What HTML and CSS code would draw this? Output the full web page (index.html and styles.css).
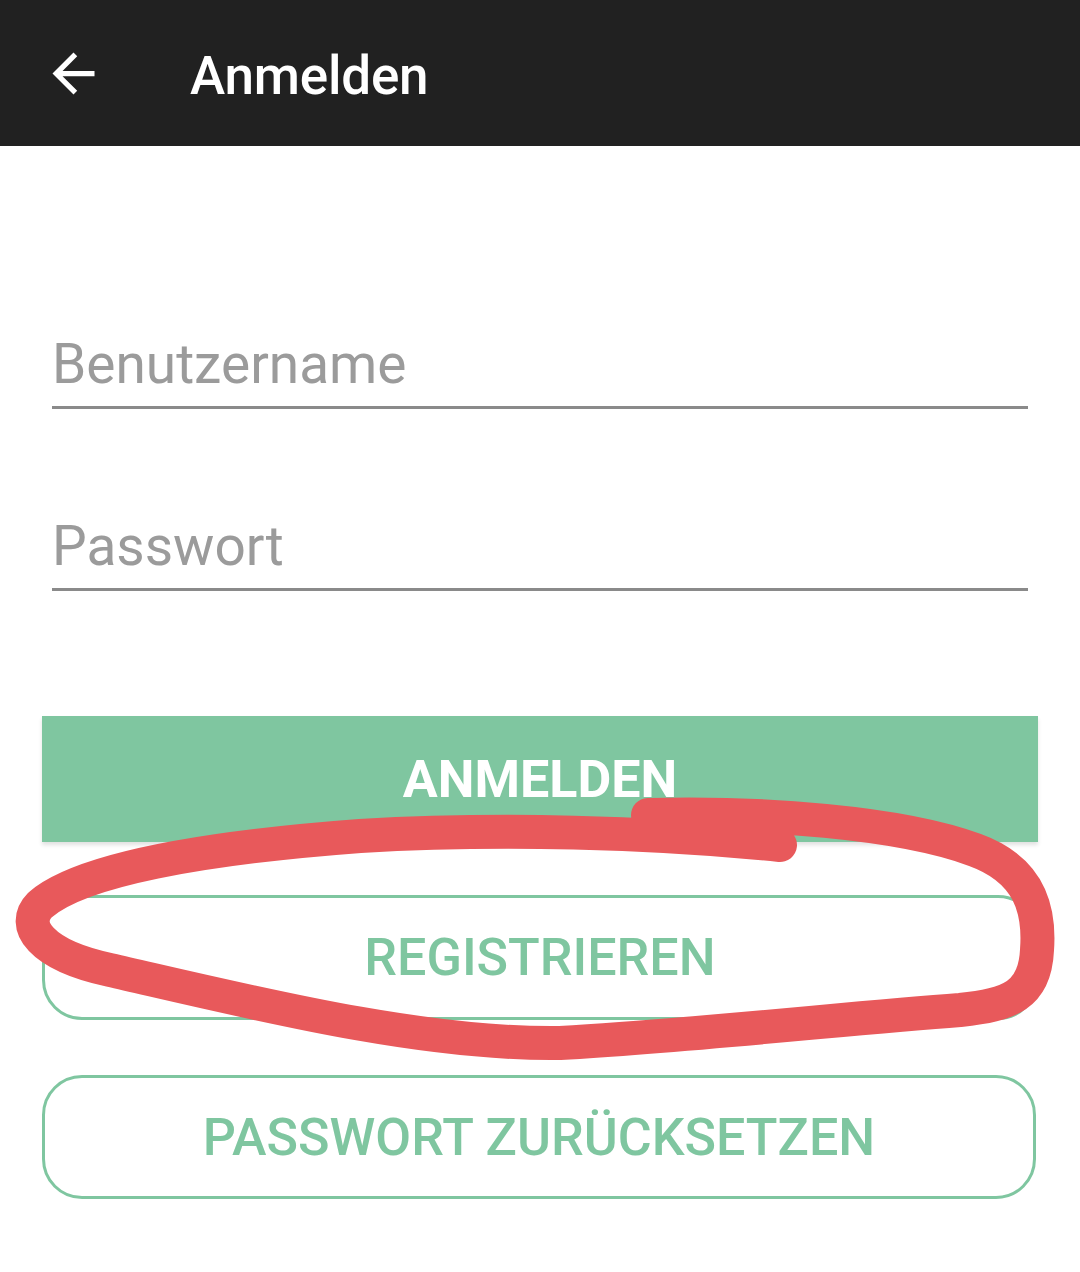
FILE: index.html
```html
<!DOCTYPE html>
<html lang="de">
<head>
<meta charset="utf-8">
<title>Anmelden</title>
<link rel="stylesheet" href="styles.css">
</head>
<body>
<div class="screen">
  <header class="appbar">
    <svg class="back" viewBox="0 0 24 24" width="63" height="63" aria-hidden="true">
      <path d="M20 11H7.83l5.59-5.59L12 4l-8 8 8 8 1.41-1.41L7.83 13H20v-2z" fill="#ffffff"/>
    </svg>
    <h1 class="title">Anmelden</h1>
  </header>
  <main class="content">
    <div class="fields">
      <div class="field">Benutzername</div>
      <div class="field field-second">Passwort</div>
    </div>
    <div class="buttons">
      <div class="btn btn-filled">ANMELDEN</div>
      <div class="btn btn-outline btn-register">REGISTRIEREN</div>
      <div class="btn btn-outline btn-reset">PASSWORT ZURÜCKSETZEN</div>
    </div>
  </main>
  <svg class="scribble" viewBox="0 0 1080 1272" width="1080" height="1272" aria-hidden="true">
    <path d="M648 815 C 760 812, 900 822, 975 850 C 1030 870, 1040 910, 1037 950 C 1035 995, 1010 1005, 960 1010 C 850 1018, 700 1035, 560 1043 C 420 1045, 250 1002, 110 970 C 40 955, 20 925, 40 905 C 80 870, 200 848, 360 836 C 500 828, 650 832, 780 845" fill="none" stroke="#e8595b" stroke-width="34" stroke-linecap="round" stroke-linejoin="round"/>
  </svg>
</div>
</body>
</html>
```

FILE: styles.css
```css
html, body {
  margin: 0;
  padding: 0;
  background: #ffffff;
}

body {
  font-family: Roboto, "Noto Sans", "Liberation Sans", sans-serif;
}

.screen {
  position: relative;
  width: 1080px;
  height: 1272px;
  overflow: hidden;
  background: #ffffff;
}

.appbar {
  height: 146px;
  background: #212121;
  display: flex;
  align-items: center;
  padding-left: 42px;
  box-sizing: border-box;
}

.back {
  display: block;
  flex: none;
}

.title {
  margin: 6px 0 0 85px;
  color: #ffffff;
  font-size: 53px;
  font-weight: 500;
  line-height: 64px;
  letter-spacing: -0.2px;
}

.content {
  padding: 0 42px;
}

.fields {
  padding: 185px 10px 0;
}

.field {
  font-size: 55px;
  line-height: 66px;
  color: #9b9b9b;
  padding-bottom: 9px;
  border-bottom: 3px solid #8a8a8a;
}

.field-second {
  margin-top: 104px;
}

.buttons {
  display: flex;
  flex-direction: column;
  margin-top: 125px;
}

.btn {
  display: flex;
  align-items: center;
  justify-content: center;
  box-sizing: border-box;
  font-size: 52px;
  font-weight: 500;
  letter-spacing: 0;
}

.btn-filled {
  height: 126px;
  background: #7fc6a0;
  color: #ffffff;
  font-weight: 700;
  box-shadow: 0 3px 4px rgba(0, 0, 0, 0.12);
}

.btn-outline {
  border: 3px solid #7fc6a0;
  border-radius: 40px;
  color: #7fc6a0;
  background: #ffffff;
}

.btn-register {
  height: 125px;
  margin-top: 53px;
}

.btn-reset {
  height: 124px;
  margin-top: 55px;
  margin-right: 2px;
}

.scribble {
  position: absolute;
  left: 0;
  top: 0;
  pointer-events: none;
}
```
